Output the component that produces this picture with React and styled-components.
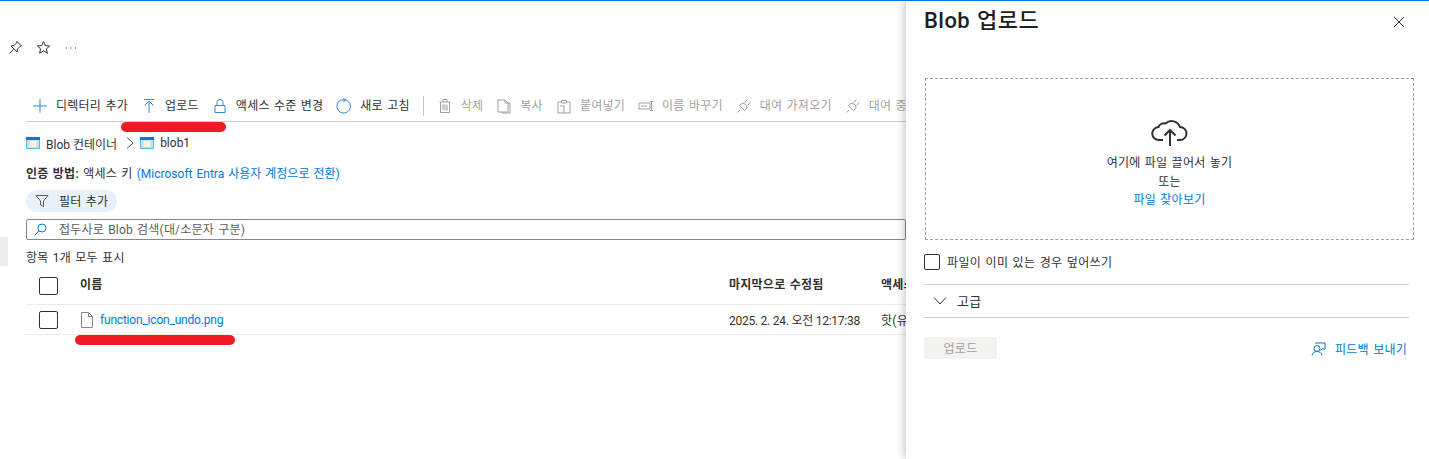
import React from 'react';
import styled, { createGlobalStyle } from 'styled-components';

const GlobalStyle = createGlobalStyle`
  html, body {
    margin: 0;
    padding: 0;
    background: #fff;
  }
  body {
    font-family: Roboto, "Noto Sans CJK KR", sans-serif;
    font-size: 12px;
    letter-spacing: 0.25px;
    word-spacing: 1px;
    color: #323130;
  }
  * {
    box-sizing: border-box;
  }
`;

const Page = styled.div`
  position: relative;
  display: flex;
  width: 1429px;
  height: 459px;
  overflow: hidden;
  border-top: 1px solid #0078d4;
`;

const Main = styled.main`
  width: 906px;
  flex: none;
  overflow: hidden;
  padding-left: 26px;
`;

const TitleActions = styled.div`
  display: flex;
  align-items: center;
  gap: 13px;
  height: 20px;
  margin: 36px 0 0 -18px;
`;

const ActionIcon = styled.svg`
  width: 15px;
  height: 15px;
  flex: none;
  fill: none;
  stroke: #323130;
  stroke-width: 1;
`;

const Toolbar = styled.div`
  display: flex;
  align-items: center;
  gap: 13px;
  height: 28px;
  margin-top: 37px;
  padding: 0 0 3px 6px;
  border-bottom: 1px solid #d2d0ce;
  white-space: nowrap;
`;

const ToolItem = styled.div`
  display: flex;
  align-items: center;
  gap: 8px;
  flex: none;
  color: ${(p) => (p.$disabled ? '#a19f9d' : '#323130')};
  line-height: 20px;
`;

const ToolIcon = styled.svg`
  width: 16px;
  height: 16px;
  flex: none;
  fill: none;
  stroke: ${(p) => (p.$disabled ? '#a19f9d' : '#2b88d8')};
  stroke-width: 1;
`;

const ToolSeparator = styled.div`
  width: 1px;
  height: 20px;
  background: #c8c6c4;
  flex: none;
`;

const Breadcrumb = styled.nav`
  display: flex;
  align-items: center;
  height: 20px;
  margin-top: 11px;
  letter-spacing: 0;
  word-spacing: 0;
`;

const ContainerGlyph = styled.svg`
  width: 14px;
  height: 12px;
  flex: none;
  margin-right: 6px;
`;

const CrumbChevron = styled.svg`
  width: 8px;
  height: 12px;
  flex: none;
  margin: 0 6px 0 9px;
  fill: none;
  stroke: #605e5c;
`;

const AuthLine = styled.div`
  height: 20px;
  margin-top: 11px;
  line-height: 20px;
`;

const Strong = styled.span`
  font-weight: 600;
`;

const Link = styled.span`
  color: #0078d4;
`;

const AuthLink = styled(Link)`
  letter-spacing: 0;
`;

const FileLink = styled(Link)`
  letter-spacing: -0.2px;
`;

const FilterPill = styled.div`
  display: flex;
  align-items: center;
  gap: 10px;
  width: 91px;
  height: 22px;
  margin-top: 6px;
  padding: 0 0 2px 9px;
  border-radius: 11px;
  background: #e7f1fa;
`;

const FilterIcon = styled.svg`
  width: 14px;
  height: 14px;
  flex: none;
  margin-top: 2px;
  fill: none;
  stroke: #605e5c;
`;

const SearchBox = styled.div`
  display: flex;
  align-items: center;
  gap: 12px;
  height: 21px;
  margin-top: 7px;
  padding: 0 0 2px 7px;
  border: 1px solid #8a8886;
  border-radius: 2px;
  color: #605e5c;
  letter-spacing: 0.2px;
`;

const SearchIcon = styled.svg`
  width: 13px;
  height: 13px;
  flex: none;
  margin-top: 2px;
  fill: none;
  stroke: #0078d4;
`;

const ItemCount = styled.div`
  height: 20px;
  margin-top: 8px;
  line-height: 20px;
`;

const Row = styled.div`
  display: grid;
  grid-template-columns: 54px 649px 152px 60px;
  align-items: center;
  height: ${(p) => p.$h}px;
  border-bottom: 1px solid #edebe9;
  white-space: nowrap;
`;

const HeadCell = styled.div`
  font-weight: 600;
  margin-bottom: 5px;
`;

const DateCell = styled.div`
  letter-spacing: -0.25px;
  word-spacing: 0;
`;

const CheckBox = styled.div`
  width: ${(p) => p.$w || 19}px;
  height: ${(p) => p.$hh || 18}px;
  margin-left: ${(p) => p.$ml || 0}px;
  border: 1px solid #323130;
  border-radius: 2px;
  background: #fff;
  flex: none;
`;

const NameCell = styled.div`
  display: flex;
  align-items: center;
  gap: 6px;
`;

const FileIcon = styled.svg`
  width: 14px;
  height: 16px;
  flex: none;
  fill: #fff;
  stroke: #8a8886;
`;

const Panel = styled.aside`
  position: relative;
  z-index: 1;
  flex: 1;
  padding: 0 15px 0 18px;
  background: #fff;
  box-shadow: -2px 0 8px rgba(0, 0, 0, 0.22);
`;

const PanelHeader = styled.header`
  display: flex;
  align-items: center;
  justify-content: space-between;
  height: 38px;
`;

const PanelTitle = styled.h2`
  margin: 0 0 4px;
  font-size: 22px;
  font-weight: 500;
  letter-spacing: 0.45px;
  color: #201f1e;
`;

const CloseIcon = styled.svg`
  width: 12px;
  height: 12px;
  fill: none;
  stroke: #323130;
  margin: 4px 9px 0 0;
`;

const DropZone = styled.div`
  display: flex;
  flex-direction: column;
  align-items: center;
  width: 489px;
  height: 162px;
  margin: 39px 0 0 1px;
  padding-top: 38px;
  border: 1px dashed #a19f9d;
  line-height: 18.5px;
`;

const CloudIcon = styled.svg`
  width: 40px;
  height: 30px;
  margin-bottom: 7px;
  fill: none;
  stroke: #323130;
  stroke-width: 2;
`;

const OverwriteRow = styled.label`
  display: flex;
  align-items: center;
  gap: 7px;
  width: 485px;
  height: 45px;
  padding-bottom: 1px;
  border-bottom: 1px solid #d2d0ce;
  letter-spacing: 0.35px;
`;

const AdvancedRow = styled.div`
  display: flex;
  align-items: center;
  gap: 10px;
  width: 485px;
  height: 33px;
  padding: 0 0 1px 9px;
  border-bottom: 1px solid #d2d0ce;
  font-size: 13px;
`;

const ChevronIcon = styled.svg`
  width: 14px;
  height: 8px;
  fill: none;
  stroke: #323130;
`;

const PanelFooter = styled.footer`
  display: flex;
  align-items: center;
  justify-content: space-between;
  width: 485px;
  margin-top: 19px;
`;

const UploadButton = styled.button`
  width: 73px;
  height: 22px;
  padding: 0 0 2px;
  border: 0;
  border-radius: 2px;
  background: #f3f2f1;
  color: #a19f9d;
  font: inherit;
  letter-spacing: inherit;
`;

const FeedbackLink = styled.div`
  display: flex;
  align-items: center;
  gap: 9px;
  margin-right: 2px;
  color: #0078d4;
`;

const FeedbackIcon = styled.svg`
  width: 15px;
  height: 15px;
  fill: none;
  stroke: #0078d4;
`;

const RedMark = styled.div`
  position: absolute;
  left: ${(p) => p.$x}px;
  top: ${(p) => p.$y}px;
  width: ${(p) => p.$w}px;
  height: 10px;
  border-radius: 5px;
  background: #ed1c24;
  z-index: 2;
`;

const EdgeTab = styled.div`
  position: absolute;
  left: 0;
  top: 236px;
  width: 8px;
  height: 29px;
  background: #edebe9;
`;

const leasePath = 'M1.500 14.500 4 12M3.500 7.500l5 5 1.500-1a3.200 3.200 0 0 0 .5-4L9 6a3.200 3.200 0 0 0-4 .2zM8.500 4.500l3-3M11.500 7.500l3-3';

const toolIcons = {
  plus: <path d="M8 1v14M1 8h14" />,
  up: <path d="M8 15V3M3.500 7.500 8 3l4.500 4.500M3 1.500h10" />,
  lock: <path d="M3 7.500h10v7H3zM5 7.500V4.500a3 3 0 0 1 6 0v3" />,
  refresh: <path d="M9.500 1.700A6.800 6.800 0 1 1 5 2M5 2h4.500M9.500 1.700 7 .5M9.500 1.700 7.500 4" />,
  trash: <path d="M3.500 4v10.500h9V4M2.500 4h11M6 4V1.500h4V4M6 6.500v6M8 6.500v6M10 6.500v6" />,
  copy: <path d="M2 2h7l3 3v9H2zM9 2v3h3M12 5h2v10H6v-1" />,
  paste: <path d="M2 4h3M11 4h3v11H8M5.500 2.500h5V5h-5zM2 4v11h6V8H4" />,
  rename: <path d="M1 5h11v6H1zM3 8h6M12 3.500h3M12 12.500h3M13.500 3.500v9" />,
  lease: <path d={leasePath} />,
};

const Tool = ({ icon, label, disabled }) => (
  <ToolItem $disabled={disabled}>
    <ToolIcon viewBox="0 0 16 16" $disabled={disabled}>{toolIcons[icon]}</ToolIcon>
    {label}
  </ToolItem>
);

const Container = () => (
  <ContainerGlyph viewBox="0 0 14 12">
    <rect width="14" height="12" rx="1" fill="#59b4e6" />
    <rect width="14" height="3" fill="#0078d4" />
    <rect x="1" y="3" width="12" height="8" fill="#c3e4f7" />
    <rect x="4" y="4" width="6" height="6" fill="#fdf3d8" />
  </ContainerGlyph>
);

const App = () => (
  <Page>
    <GlobalStyle />
    <EdgeTab />
    <Main>
      <TitleActions>
        <ActionIcon viewBox="0 0 15 15">
          <path d="M9 1.500 13.500 6 12 6.500 9.500 9l-.5 3L3 6l3-.5L8.500 3zM5.500 9.500 1.500 13.500" />
        </ActionIcon>
        <ActionIcon viewBox="0 0 15 15">
          <path d="M7.500 1.500 9.300 5.600l4.400.4-3.300 2.900 1 4.300-3.900-2.300-3.900 2.300 1-4.300L1.300 6l4.400-.4z" />
        </ActionIcon>
        <ActionIcon viewBox="0 0 15 15">
          <path d="M2 8h1M6.500 8h1M11 8h1" />
        </ActionIcon>
      </TitleActions>

      <Toolbar>
        <Tool icon="plus" label="디렉터리 추가" />
        <Tool icon="up" label="업로드" />
        <Tool icon="lock" label="액세스 수준 변경" />
        <Tool icon="refresh" label="새로 고침" />
        <ToolSeparator />
        <Tool disabled icon="trash" label="삭제" />
        <Tool disabled icon="copy" label="복사" />
        <Tool disabled icon="paste" label="붙여넣기" />
        <Tool disabled icon="rename" label="이름 바꾸기" />
        <Tool disabled icon="lease" label="대여 가져오기" />
        <Tool disabled icon="lease" label="대여 중단" />
      </Toolbar>

      <Breadcrumb>
        <Container />
        Blob 컨테이너
        <CrumbChevron viewBox="0 0 8 12"><path d="M1 .5 7 6l-6 5.500" /></CrumbChevron>
        <Container />
        blob1
      </Breadcrumb>

      <AuthLine>
        <Strong>인증 방법:</Strong> 액세스 키 <AuthLink>(Microsoft Entra 사용자 계정으로 전환)</AuthLink>
      </AuthLine>

      <FilterPill>
        <FilterIcon viewBox="0 0 14 14"><path d="M1 1.500h12L8.500 7v5.500l-3-1.500V7z" /></FilterIcon>
        필터 추가
      </FilterPill>

      <SearchBox>
        <SearchIcon viewBox="0 0 13 13"><circle cx="8" cy="5" r="4" /><path d="M5 8 .8 12.200" /></SearchIcon>
        접두사로 Blob 검색(대/소문자 구분)
      </SearchBox>

      <ItemCount>항목 1개 모두 표시</ItemCount>

      <Row $h={37}>
        <CheckBox $ml={13} />
        <HeadCell>이름</HeadCell>
        <HeadCell>마지막으로 수정됨</HeadCell>
        <HeadCell>액세스 계층</HeadCell>
      </Row>
      <Row $h={30}>
        <CheckBox $ml={13} />
        <NameCell>
          <FileIcon viewBox="0 0 14 16"><path d="M1.500.5h7l4 4v11h-11zM8.500.5v4h4" /></FileIcon>
          <FileLink>function_icon_undo.png</FileLink>
        </NameCell>
        <DateCell>2025. 2. 24. 오전 12:17:38</DateCell>
        <div>핫(유추됨)</div>
      </Row>
    </Main>

    <Panel>
      <PanelHeader>
        <PanelTitle>Blob 업로드</PanelTitle>
        <CloseIcon viewBox="0 0 12 12"><path d="M1 1l10 10M11 1 1 11" /></CloseIcon>
      </PanelHeader>

      <DropZone>
        <CloudIcon viewBox="0 0 40 30">
          <path d="M13 23H9a6.500 6.500 0 0 1-.5-13 6 6 0 0 1 7-3.500A9 9 0 0 1 30 10a6.500 6.500 0 0 1 0 13h-3" />
          <path d="M20 29V13M14.500 18.500 20 13l5.500 5.500" />
        </CloudIcon>
        <div>여기에 파일 끌어서 놓기</div>
        <div>또는</div>
        <Link>파일 찾아보기</Link>
      </DropZone>

      <OverwriteRow>
        <CheckBox $w={16} $hh={16} />
        파일이 이미 있는 경우 덮어쓰기
      </OverwriteRow>

      <AdvancedRow>
        <ChevronIcon viewBox="0 0 14 8"><path d="M1 .5 7 7l6-6.500" /></ChevronIcon>
        고급
      </AdvancedRow>

      <PanelFooter>
        <UploadButton disabled>업로드</UploadButton>
        <FeedbackLink>
          <FeedbackIcon viewBox="0 0 15 15">
            <circle cx="6" cy="7.500" r="3" />
            <path d="M1 14.500c.5-2.500 2.500-4 5-4s4.500 1.500 5 4M4 2h10v6h-3l-1.500 1.500" />
          </FeedbackIcon>
          피드백 보내기
        </FeedbackLink>
      </PanelFooter>
    </Panel>

    <RedMark $x={121} $y={121} $w={105} />
    <RedMark $x={75} $y={334} $w={160} />
  </Page>
);

export default App;
